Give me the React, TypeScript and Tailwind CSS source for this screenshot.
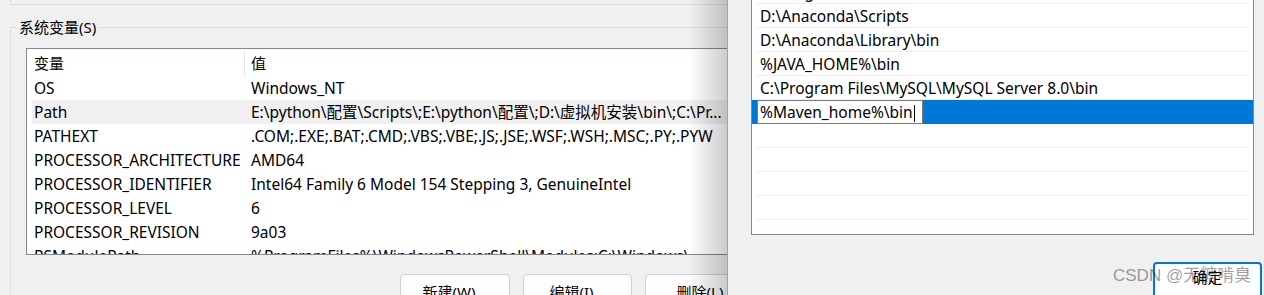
import React from "react";

const sysVars = [
  ["OS", "Windows_NT"],
  ["Path", "E:\\python\\配置\\Scripts\\;E:\\python\\配置\\;D:\\虚拟机安装\\bin\\;C:\\Pr..."],
  ["PATHEXT", ".COM;.EXE;.BAT;.CMD;.VBS;.VBE;.JS;.JSE;.WSF;.WSH;.MSC;.PY;.PYW"],
  ["PROCESSOR_ARCHITECTURE", "AMD64"],
  ["PROCESSOR_IDENTIFIER", "Intel64 Family 6 Model 154 Stepping 3, GenuineIntel"],
  ["PROCESSOR_LEVEL", "6"],
  ["PROCESSOR_REVISION", "9a03"],
  ["PSModulePath", "%ProgramFiles%\\WindowsPowerShell\\Modules;C:\\Windows\\..."],
];

const pathItems = [
  "C:\\Program Files\\Git\\cmd",
  "D:\\Anaconda\\Scripts",
  "D:\\Anaconda\\Library\\bin",
  "%JAVA_HOME%\\bin",
  "C:\\Program Files\\MySQL\\MySQL Server 8.0\\bin",
];

const EnvVarsWindow = () => {
  return (
    <div className="relative w-[727px] flex-none overflow-hidden bg-[#f0f0f0]">
      <div className="ml-[10px] h-[5px] border-b border-l border-[#dcdcdc]" />
      <div className="relative ml-[10px] mt-[22px] h-[300px] border-l border-t border-[#dcdcdc]">
        <span className="absolute -top-[11px] left-[5px] bg-[#f0f0f0] px-[3px] text-[15px] leading-[20px]">
          系统变量(S)
        </span>
        <div className="ml-[15px] mt-[20px] h-[207px] w-[800px] overflow-hidden border border-[#828790] bg-white">
          <div className="flex h-[27px] items-center pt-[2px]">
            <span className="w-[217px] pl-[7px] text-[15px]">变量</span>
            <span className="h-[25px] w-px bg-[#e5e5e5]" />
            <span className="pl-[6px] text-[15px]">值</span>
          </div>
          {sysVars.map(([name, value]) => (
            <div
              key={name}
              className={
                name === "Path"
                  ? "ml-[5px] flex h-[24px] items-center bg-[#f0f0f0] pt-[2px]"
                  : "ml-[5px] flex h-[24px] items-center pt-[2px]"
              }
            >
              <span className="w-[212px] flex-none whitespace-nowrap pl-[2px] text-[15.5px]">{name}</span>
              <span className="whitespace-nowrap pl-[7px] text-[15.5px]">{value}</span>
            </div>
          ))}
        </div>
        <div className="ml-[389px] mt-[19px] flex gap-[13px]">
          <div className="flex h-[32px] w-[110px] flex-none items-center justify-center rounded-[4px] border border-[#d0d0d0] bg-[#fdfdfd] pt-[4px] text-[15px]">
            新建(W)...
          </div>
          <div className="flex h-[32px] w-[109px] flex-none items-center justify-center rounded-[4px] border border-[#d0d0d0] bg-[#fdfdfd] pt-[4px] text-[15px]">
            编辑(I)...
          </div>
          <div className="flex h-[32px] w-[110px] flex-none items-center justify-center rounded-[4px] border border-[#d0d0d0] bg-[#fdfdfd] pt-[4px] text-[15px]">
            删除(L)
          </div>
        </div>
      </div>
      <div className="pointer-events-none absolute inset-y-0 right-0 w-[38px] bg-gradient-to-r from-transparent to-black/20" />
    </div>
  );
};

const EditPathWindow = () => {
  return (
    <div className="relative flex-1 border-l border-[#a3a3a3] bg-[#f0f0f0] pl-[23px]">
      <div className="-mt-[20px] h-[255px] w-[503px] overflow-hidden border-x border-b border-[#828790] bg-white">
        {pathItems.map((item) => (
          <div key={item} className="mx-[4px] flex h-[24px] items-center border-b border-[#efefef] pl-[4px] pt-[3px] text-[15.5px]">
            {item}
          </div>
        ))}
        <div className="flex h-[24px] items-stretch bg-[#0078d7] pl-[5px]">
          <div className="flex w-[166px] items-center border border-[#7a7a7a] bg-white pl-[2px] pt-[2px] text-[15.5px]">
            %Maven_home%\bin
            <span className="ml-[1px] h-[17px] w-px bg-black" />
          </div>
        </div>
        {[0, 1, 2, 3, 4].map((i) => (
          <div key={i} className="mx-[4px] h-[24px] border-b border-[#efefef]" />
        ))}
      </div>
      <div className="mt-[27px] flex justify-end pr-[2px]">
        <div className="flex h-[36px] w-[109px] items-start justify-center rounded-[4px] border-2 border-[#0078d7] bg-white pt-[6px] text-[15px]">
          确定
        </div>
      </div>
      <span className="pointer-events-none absolute left-[385px] top-[267px] whitespace-nowrap font-['Liberation_Sans','Noto_Sans_CJK_SC',sans-serif] text-[17px] text-black/40">
        CSDN @无糖啃臭
      </span>
    </div>
  );
};

export default function App() {
  return (
    <div className="flex h-[295px] w-[1264px] overflow-hidden bg-[#f0f0f0] font-['Noto_Sans','Noto_Sans_CJK_SC',sans-serif] leading-none text-black">
      <EnvVarsWindow />
      <EditPathWindow />
    </div>
  );
}
